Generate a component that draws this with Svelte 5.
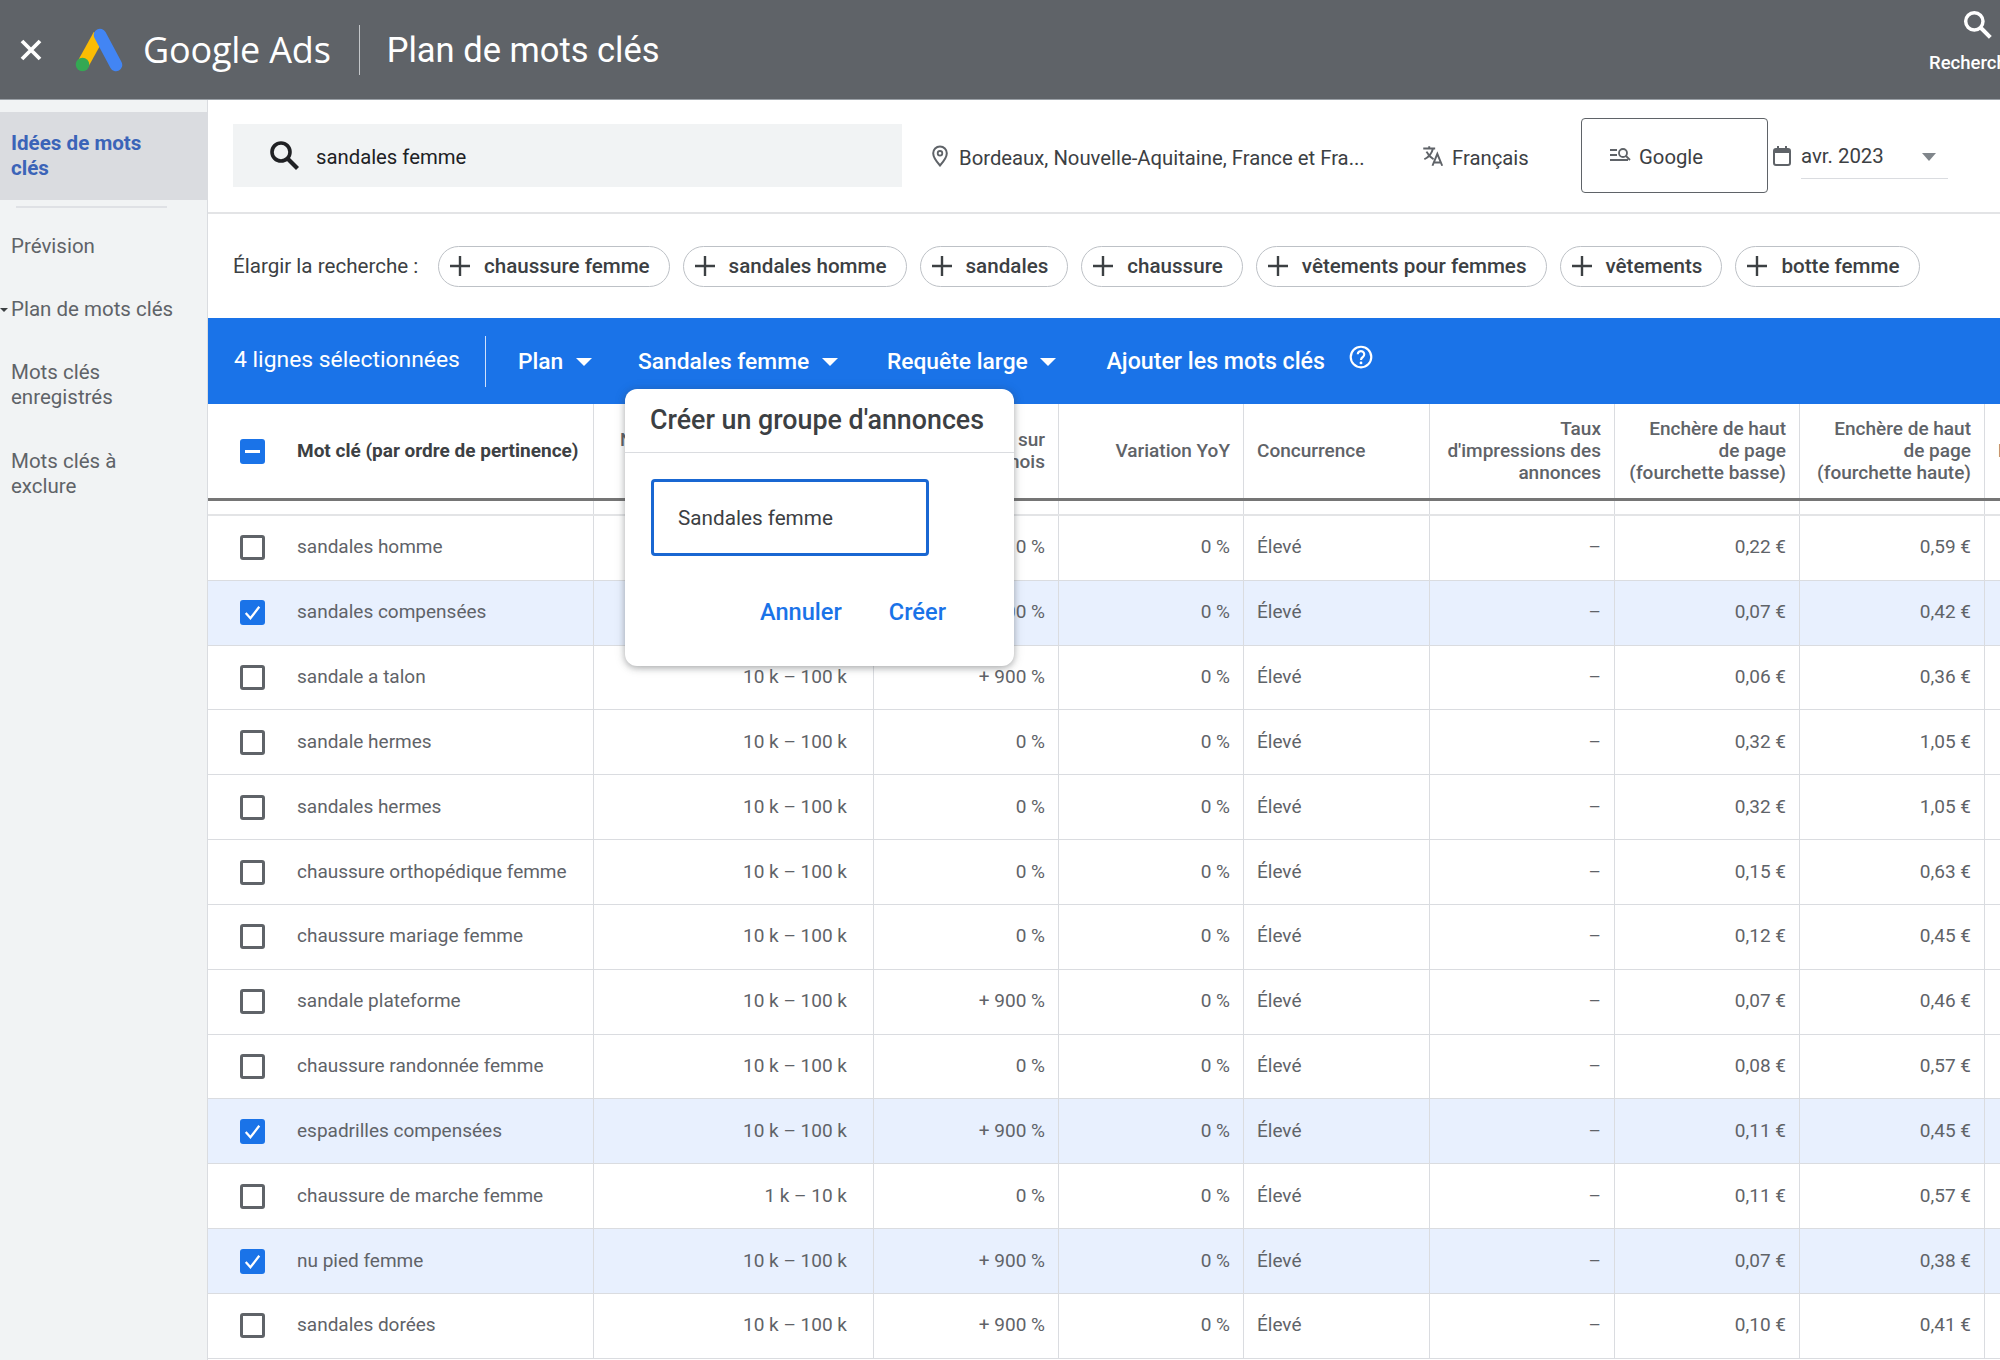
<script>
  const chips = ['chaussure femme','sandales homme','sandales','chaussure','vêtements pour femmes','vêtements','botte femme'];
  const rows = [
    ['sandales homme','10 k – 100 k','0 %','0,22 €','0,59 €',false],
    ['sandales compensées','10 k – 100 k','+ 900 %','0,07 €','0,42 €',true],
    ['sandale a talon','10 k – 100 k','+ 900 %','0,06 €','0,36 €',false],
    ['sandale hermes','10 k – 100 k','0 %','0,32 €','1,05 €',false],
    ['sandales hermes','10 k – 100 k','0 %','0,32 €','1,05 €',false],
    ['chaussure orthopédique femme','10 k – 100 k','0 %','0,15 €','0,63 €',false],
    ['chaussure mariage femme','10 k – 100 k','0 %','0,12 €','0,45 €',false],
    ['sandale plateforme','10 k – 100 k','+ 900 %','0,07 €','0,46 €',false],
    ['chaussure randonnée femme','10 k – 100 k','0 %','0,08 €','0,57 €',false],
    ['espadrilles compensées','10 k – 100 k','+ 900 %','0,11 €','0,45 €',true],
    ['chaussure de marche femme','1 k – 10 k','0 %','0,11 €','0,57 €',false],
    ['nu pied femme','10 k – 100 k','+ 900 %','0,07 €','0,38 €',true],
    ['sandales dorées','10 k – 100 k','+ 900 %','0,10 €','0,41 €',false]
  ];
</script>

<div class="page">
  <header class="top">
    <svg class="close" viewBox="0 0 24 24" width="24" height="24"><path d="M3 3 L21 21 M21 3 L3 21" stroke="#fff" stroke-width="3.8" fill="none"/></svg>
    <svg class="logo" viewBox="0 0 48 44" width="48" height="44">
      <path d="M24 7 L8 36" stroke="#fbbc04" stroke-width="12" fill="none"/>
      <path d="M25 7 L41 37" stroke="#4285f4" stroke-width="12.5" stroke-linecap="round" fill="none"/>
      <circle cx="7.5" cy="36.5" r="6.8" fill="#34a853"/>
    </svg>
    <span class="brand">Google Ads</span>
    <span class="top-div"></span>
    <span class="page-title">Plan de mots clés</span>
    <div class="top-search">
      <svg viewBox="0 0 24 24" width="32" height="32"><circle cx="10" cy="10" r="6.5" stroke="#fff" stroke-width="2.6" fill="none"/><path d="M15 15 L22 22" stroke="#fff" stroke-width="3" fill="none"/></svg>
      <span>Recherche</span>
    </div>
  </header>

  <div class="body">
    <nav class="side">
      <div class="nav-active">Idées de mots<br/>clés</div>
      <div class="nav-rule"></div>
      <div class="nav-item one">Prévision</div>
      <div class="nav-item one marked">Plan de mots clés</div>
      <div class="nav-item">Mots clés<br/>enregistrés</div>
      <div class="nav-item">Mots clés à<br/>exclure</div>
    </nav>

    <main class="main">
      <section class="filters">
        <div class="search">
          <svg viewBox="0 0 24 24" width="36" height="36"><circle cx="10" cy="10" r="6" stroke="#202124" stroke-width="2.4" fill="none"/><path d="M14.5 14.5 L21 21" stroke="#202124" stroke-width="2.8" fill="none"/></svg>
          <span>sandales femme</span>
        </div>
        <div class="loc">
          <svg viewBox="0 0 24 24" width="24" height="24"><path d="M12 2.5c-3.9 0-6.8 3-6.8 6.8 0 4.700 6.800 12.200 6.800 12.200s6.800-7.500 6.800-12.200c0-3.800-2.900-6.800-6.800-6.800z" stroke="#5f6368" stroke-width="2" fill="none"/><circle cx="12" cy="9.300" r="2.300" stroke="#5f6368" stroke-width="1.800" fill="none"/></svg>
          <span>Bordeaux, Nouvelle-Aquitaine, France et Fra...</span>
        </div>
        <div class="lang">
          <svg viewBox="0 0 24 24" width="26" height="26"><path d="M3 5h11M8.500 3v2M12 5c-1 4-4 8-8 10M6 8c1.500 3 4 5.500 6.500 7M11.500 21l4.500-11 4.500 11M13 18h6" stroke="#5f6368" stroke-width="1.800" fill="none"/></svg>
          <span>Français</span>
        </div>
        <div class="network">
          <svg viewBox="0 0 24 24" width="24" height="24"><path d="M2 7h7M2 12h7M2 17h18" stroke="#5f6368" stroke-width="1.800" fill="none"/><circle cx="15" cy="10" r="4" stroke="#5f6368" stroke-width="1.800" fill="none"/><path d="M18 13l4 4" stroke="#5f6368" stroke-width="1.800"/></svg>
          <span>Google</span>
        </div>
        <svg class="cal" viewBox="0 0 24 24" width="24" height="24"><rect x="4" y="5" width="16" height="16" rx="2" stroke="#5f6368" stroke-width="2" fill="none"/><path d="M4 5h16v4H4z" fill="#5f6368"/><path d="M8 2v4M16 2v4" stroke="#5f6368" stroke-width="2"/></svg>
        <div class="date">
          <span>avr. 2023</span>
          <i class="caret grey"></i>
        </div>
      </section>

      <section class="chips">
        <span class="chips-label">Élargir la recherche :</span>
        {#each chips as c}
          <span class="chip">
            <svg viewBox="0 0 22 22" width="22" height="22"><path d="M11 1v20M1 11h20" stroke="#3c4043" stroke-width="2.400"/></svg>
            {c}
          </span>
        {/each}
      </section>

      <section class="bar">
        <span class="sel">4 lignes sélectionnées</span>
        <span class="bar-div"></span>
        <span class="act a1">Plan <i class="caret"></i></span>
        <span class="act a2">Sandales femme <i class="caret"></i></span>
        <span class="act a3">Requête large <i class="caret"></i></span>
        <span class="act a4">Ajouter les mots clés</span>
        <svg class="help" viewBox="0 0 24 24" width="26" height="26"><circle cx="12" cy="12" r="9.500" stroke="#fff" stroke-width="2" fill="none"/><path d="M9 9.500a3 3 0 1 1 4.700 2.500c-1.100.8-1.700 1.400-1.700 2.700" stroke="#fff" stroke-width="2" fill="none"/><circle cx="12" cy="17.500" r="1.300" fill="#fff"/></svg>
      </section>

      <section class="table">
        <div class="row head">
          <div class="c first">
            <span class="cb indet"><i></i></span>
            <strong>Mot clé (par ordre de pertinence)</strong>
          </div>
          <div class="c r tight">Nombre moyen de recherches<br/>mensuelles</div>
          <div class="c r">Évolution sur<br/>trois mois</div>
          <div class="c r">Variation YoY</div>
          <div class="c">Concurrence</div>
          <div class="c r">Taux<br/>d'impressions des<br/>annonces</div>
          <div class="c r">Enchère de haut<br/>de page<br/>(fourchette basse)</div>
          <div class="c r">Enchère de haut<br/>de page<br/>(fourchette haute)</div>
          <div class="c">État</div>
        </div>
        <div class="row spacer">
          <div class="c"></div><div class="c"></div><div class="c"></div><div class="c"></div><div class="c"></div><div class="c"></div><div class="c"></div><div class="c"></div><div class="c"></div>
        </div>
        {#each rows as r}
          <div class="row data" class:picked={r[5]}>
            <div class="c first">
              {#if r[5]}
                <span class="cb on"><svg viewBox="0 0 24 24" width="24" height="24"><path d="M5.500 12.500l4.500 5 8.500-11" stroke="#fff" stroke-width="2.200" fill="none"/></svg></span>
              {:else}
                <span class="cb"></span>
              {/if}
              <span>{r[0]}</span>
            </div>
            <div class="c r vol">{r[1]}</div>
            <div class="c r">{r[2]}</div>
            <div class="c r">0 %</div>
            <div class="c">Élevé</div>
            <div class="c r">–</div>
            <div class="c r">{r[3]}</div>
            <div class="c r">{r[4]}</div>
            <div class="c"></div>
          </div>
        {/each}

        <div class="popup">
          <div class="pop-title">Créer un groupe d'annonces</div>
          <div class="pop-body">
            <div class="field">Sandales femme</div>
            <div class="pop-actions">
              <span>Annuler</span>
              <span>Créer</span>
            </div>
          </div>
        </div>
      </section>
    </main>
  </div>
</div>

<style>
  :global(body) { margin: 0; }
  .page {
    width: 2000px; height: 1360px; overflow: hidden; display: flex; flex-direction: column;
    font-family: Roboto, "Liberation Sans", sans-serif; color: #3c4043; background: #fff;
  }
  .top {
    height: 99px; flex: none; background: #5f6368; border-bottom: 1px solid #9aa0a6;
    display: flex; align-items: center; color: #fff; position: relative;
  }
  .close { margin-left: 19px; }
  .logo { margin-left: 32px; margin-top: 1px; }
  .brand { margin-left: 20px; font-size: 36px; font-family: "Open Sans", Roboto, sans-serif; letter-spacing: -0.2px; color: #fff; }
  .top-div { width: 1px; height: 50px; background: #c4c7ca; margin-left: 28px; }
  .page-title { margin-left: 27px; font-size: 34.5px; color: #fff; }
  .top-search {
    position: absolute; left: 1929px; top: 8px; display: flex; flex-direction: column; align-items: flex-end; width: 90px;
    font-size: 18.5px; font-weight: 500; white-space: nowrap;
  }
  .top-search svg { margin: 0 26px 12px 0; }
  .top-search span { width: 90px; }

  .body { flex: 1; display: flex; min-height: 0; }
  .side { width: 207px; flex: none; background: #f1f3f4; border-right: 1px solid #dadce0; padding-top: 12px; box-sizing: content-box; font-size: 20.5px; line-height: 25px; color: #5f6368; }
  .nav-active { height: 88px; box-sizing: border-box; padding: 19px 0 0 11px; background: #dadce0; color: #3b64b8; font-weight: 700; font-size: 20.6px; }
  .nav-rule { height: 2px; margin: 6px 40px 0 16px; background: #dfe1e5; }
  .nav-item { padding-left: 11px; margin-bottom: 39px; min-height: 25px; position: relative; }
  .nav-item.one { margin-bottom: 38px; }
  .side .nav-rule + .nav-item { margin-top: 26px; }
  .marked::before { content: ""; position: absolute; left: 0; top: 11px; border-top: 4px solid #3c4043; border-bottom: 4px solid transparent; border-left: 4px solid transparent; border-right: 4px solid transparent; }

  .main { flex: 1; min-width: 0; display: flex; flex-direction: column; }
  .filters { height: 114px; flex: none; box-sizing: border-box; border-bottom: 2px solid #e3e4e6; display: flex; align-items: center; padding-left: 25px; font-size: 20.3px; color: #3c4043; }
  .filters span { padding-top: 4px; }
  .search { width: 669px; height: 63px; margin-top: -2px; background: #f1f3f4; display: flex; align-items: center; color: #202124; }
  .search svg { margin-left: 33px; margin-right: 14px; }
  .loc { display: flex; align-items: center; gap: 7px; margin-left: 26px; width: 470px; flex: none; }
  .lang { display: flex; align-items: center; gap: 6px; margin-left: 22px; width: 180px; flex: none; }
  .network { width: 187px; height: 75px; box-sizing: border-box; border: 1px solid #5f6368; border-radius: 4px; display: flex; align-items: center; gap: 7px; padding-left: 26px; margin-left: -19px; flex: none; margin-top: -2px; }
  .cal { margin-left: 2px; flex: none; }
  .date { width: 147px; height: 44px; margin-left: 7px; box-sizing: border-box; border-bottom: 1px solid #dadce0; display: flex; align-items: center; justify-content: space-between; padding-right: 12px; flex: none; font-size: 20.4px; margin-top: 2px; }
  .filters .date span { padding-top: 0; padding-bottom: 2px; }

  .caret { display: inline-block; width: 0; height: 0; border-left: 8px solid transparent; border-right: 8px solid transparent; border-top: 8px solid #fff; vertical-align: 3px; margin-left: 7px; }
  .caret.grey { border-top-color: #80868b; border-left-width: 7.500px; border-right-width: 7.500px; }

  .chips { height: 104px; flex: none; box-sizing: border-box; display: flex; align-items: center; padding-left: 25px; font-size: 20.6px; }
  .chips-label { margin-right: 17px; color: #3c4043; width: 188px; white-space: nowrap; }
  .chip { height: 41px; box-sizing: border-box; border: 1px solid #bdc1c6; border-radius: 21px; display: flex; align-items: center; gap: 13px; padding: 0 19px 0 10px; margin-right: 13px; font-weight: 500; color: #3c4043; white-space: nowrap; }

  .bar { height: 86px; flex: none; box-sizing: border-box; background: #1a73e8; color: #fff; display: flex; align-items: center; padding-left: 26px; font-size: 22.8px; font-weight: 500; position: relative; }
  .sel { font-weight: 400; font-size: 22.9px; margin-top: -3px; white-space: nowrap; }
  .bar-div { width: 1px; height: 51px; background: #cfe0fb; margin-left: 25px; }
  .act { white-space: nowrap; }
  .a1 { margin-left: 32px; }
  .a2 { margin-left: 46px; }
  .a3 { margin-left: 49px; }
  .a4 { margin-left: 50px; font-size: 23.2px; }
  .help { margin-left: 23px; margin-top: -8px; }

  .table { position: relative; flex: 1; min-height: 0; font-size: 19px; }
  .row { display: grid; grid-template-columns: 386px 280px 185px 185px 186px 185px 185px 185px 200px; width: 1792px; }
  .c { box-sizing: border-box; border-right: 1px solid #dadce0; padding: 0 13px; display: flex; align-items: center; white-space: nowrap; color: #5f6368; }
  .c.r { justify-content: flex-end; text-align: right; }
  .c.vol { padding-right: 26px; }
  .head .c.tight { padding-right: 5px; font-size: 18.5px; }
  .head { height: 97px; border-bottom: 3px solid #757575; box-sizing: border-box; }
  .head .c { font-size: 19px; line-height: 22px; font-weight: 500; color: #5f6368; }
  .head strong { font-weight: 700; color: #3c4043; font-size: 19px; }
  .spacer { height: 13px; border-bottom: 2px solid #e3e4e6; box-sizing: content-box; }
  .data { height: 64.830px; box-sizing: border-box; border-bottom: 1px solid #dadce0; }
  .data .c { padding-bottom: 2px; }
  .data .cb { margin-top: 2px; }
  .data.picked { background: #e8f0fe; }
  .first { padding-left: 32px; gap: 32px; }
  .cb { width: 25px; height: 25px; box-sizing: border-box; border: 3px solid #5f6368; border-radius: 3px; flex: none; display: block; }
  .cb.on { background: #1a73e8; border: none; }
  .cb.on svg { display: block; width: 25px; height: 25px; }
  .cb.indet { background: #1a73e8; border: none; display: flex; align-items: center; justify-content: center; }
  .cb.indet i { width: 15px; height: 3px; background: #fff; display: block; }

  .popup { position: absolute; left: 417px; top: -15px; width: 389px; height: 277px; background: #fff; border-radius: 12px; box-shadow: 0 2px 6px rgba(60,64,67,.35), 0 1px 12px rgba(60,64,67,.15); display: flex; flex-direction: column; z-index: 2; }
  .pop-title { height: 64px; box-sizing: border-box; padding: 15px 0 0 25px; border-bottom: 1px solid #dadce0; font-size: 26.8px; font-weight: 500; color: #3c4043; white-space: nowrap; }
  .pop-body { padding: 26px 0 0 26px; }
  .field { width: 278px; height: 77px; box-sizing: border-box; border: 3px solid #1967d2; border-radius: 4px; display: flex; align-items: center; padding-left: 24px; font-size: 20.7px; color: #3c4043; }
  .pop-actions { display: flex; margin-top: 42px; padding-left: 109px; gap: 47px; font-size: 23.6px; font-weight: 500; color: #1a73e8; }
</style>
